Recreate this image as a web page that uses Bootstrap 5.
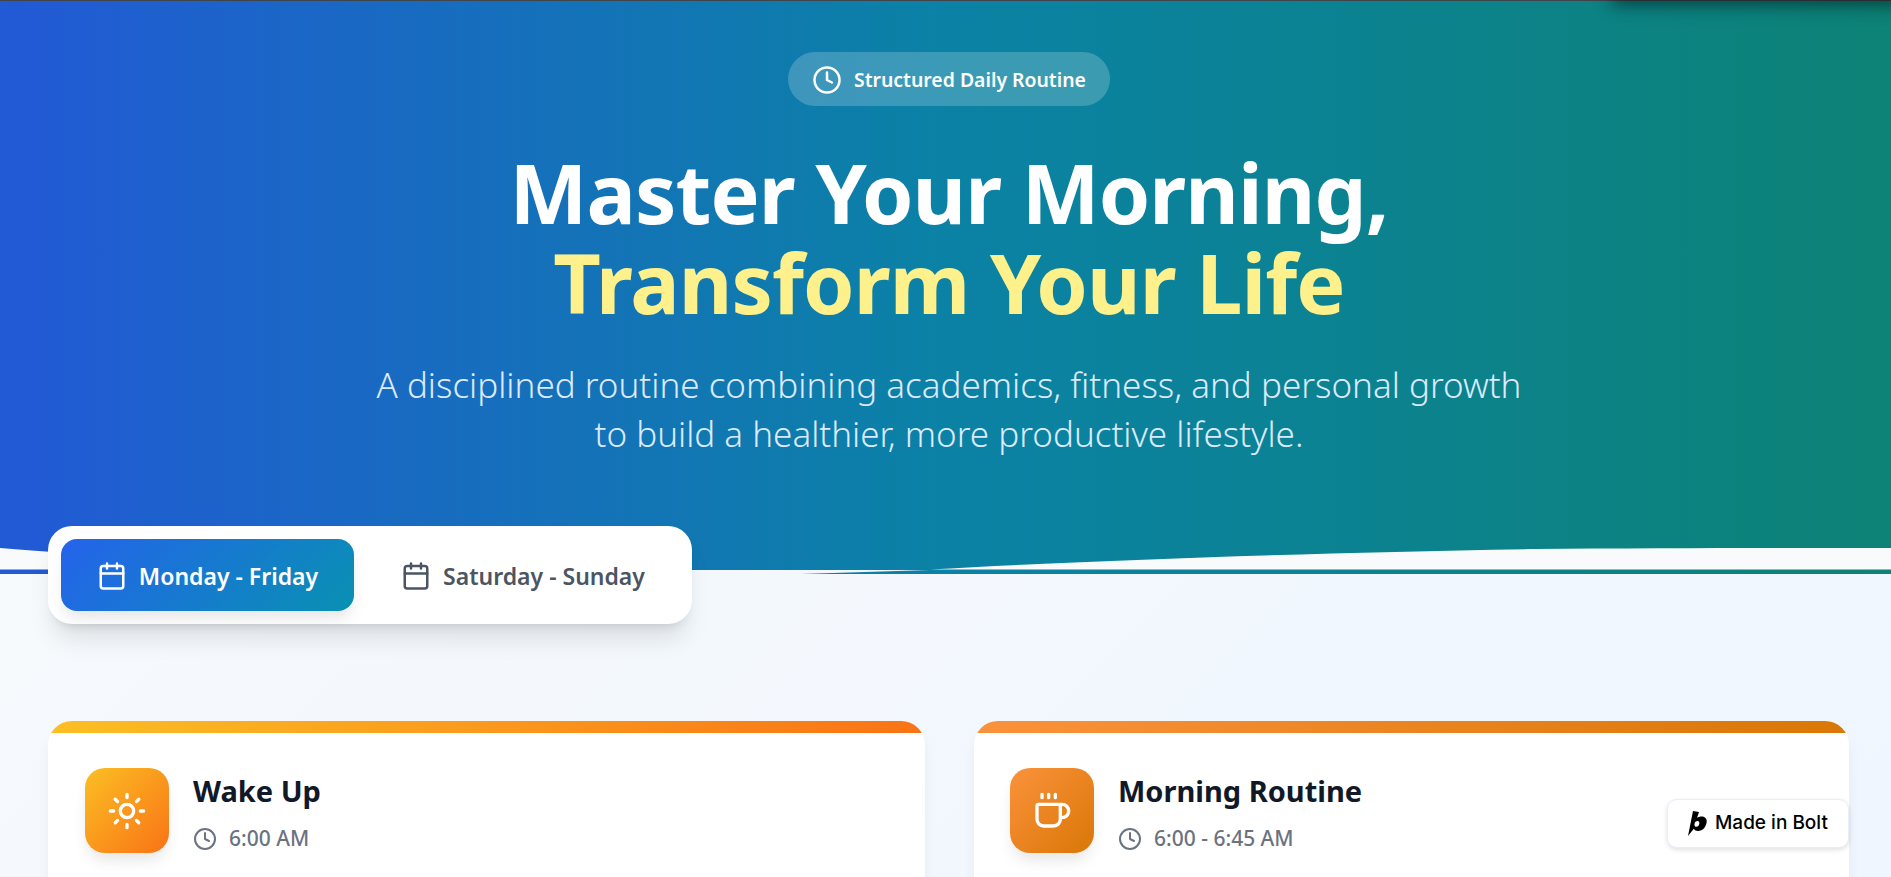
<!DOCTYPE html>
<html lang="en">
<head>
  <meta charset="UTF-8" />
  <meta name="viewport" content="width=device-width, initial-scale=1.0" />
  <title>Daily Routine</title>
  <link href="https://cdn.jsdelivr.net/npm/bootstrap@5.3.0/dist/css/bootstrap.min.css" rel="stylesheet">
  <style>
    body {
      font-family: "Noto Sans", "Open Sans", sans-serif;
      background: linear-gradient(135deg, #f8fafc, #eff6ff);
      height: 877px;
      overflow: hidden;
    }
    .hero-wrap {
      height: 574px;
      background: linear-gradient(90deg, #2259d6 0%, #0b82a5 50%, #0d8276 100%);
      border-top: 1px solid #3f454b;
      color: #fff;
      padding: 51px 0 0 7px;
    }
    .hero-wave {
      position: absolute;
      left: 0;
      top: 548px;
      width: 100%;
      height: 26px;
    }
    .top-shade {
      position: absolute;
      top: -20px;
      left: 1612px;
      right: -20px;
      height: 20px;
      box-shadow: 0 4px 18px rgba(0, 20, 20, .65);
    }
    .pill-tag {
      height: 54px;
      padding: 2px 24px 0;
      background: rgba(255, 255, 255, .2);
      font-size: 19.4px;
      font-weight: 600;
    }
    .hero-title {
      font-size: 82.5px;
      font-weight: 700;
      line-height: 90px;
      letter-spacing: -.9px;
      margin: 41px 0 0;
    }
    .hero-title span { display: block; }
    .hero-accent { color: #fef08a; }
    .hero-sub {
      font-size: 35px;
      font-weight: 300;
      line-height: 49px;
      color: #dbeafe;
      margin: 33px auto 0;
      width: 1160px;
    }
    .tab-box {
      position: absolute;
      left: 48px;
      top: 526px;
      width: 644px;
      height: 98px;
      background: #fff;
      border-radius: 24px;
      padding: 13px 0 13px 13px;
      box-shadow: 0 20px 25px -5px rgba(0, 0, 0, .1), 0 8px 10px -6px rgba(0, 0, 0, .1);
    }
    .tab-btn {
      height: 72px;
      padding-top: 2px;
      border-radius: 16px;
      font-size: 23px;
      font-weight: 600;
      color: #4b5563;
    }
    .tab-on {
      width: 293px;
      color: #fff;
      background: linear-gradient(135deg, #2563eb, #0891b2);
      box-shadow: 0 10px 15px -3px rgba(0, 0, 0, .1);
    }
    .tab-off { width: 338px; }
    .card-area {
      padding: 147px 42px 0 48px;
      gap: 49px;
    }
    .step-card {
      flex: 1 1 0;
      height: 300px;
      background: #fff;
      border-radius: 24px;
      overflow: hidden;
      box-shadow: 0 10px 15px -3px rgba(0, 0, 0, .08);
    }
    .step-wide { flex: 0 0 877px; }
    .step-bar { height: 12px; }
    .bar-sun { background: linear-gradient(90deg, #fbbf24, #f97316); }
    .bar-cup { background: linear-gradient(90deg, #fb923c, #d97706); }
    .step-body { padding: 35px 36px; }
    .step-wide .step-body { padding-left: 37px; }
    .step-icon {
      width: 84px;
      height: 85px;
      border-radius: 20px;
      box-shadow: 0 10px 15px -3px rgba(0, 0, 0, .1);
    }
    .icon-sun { background: linear-gradient(135deg, #fbbf24, #f97316); }
    .icon-cup { background: linear-gradient(135deg, #fb923c, #d97706); }
    .step-title {
      font-size: 29px;
      font-weight: 700;
      color: #111827;
      line-height: 36px;
      margin: 5px 0 14px;
    }
    .step-time {
      font-size: 21px;
      font-weight: 500;
      color: #6b7280;
    }
    .bolt-badge {
      position: absolute;
      left: 1667px;
      top: 799px;
      width: 182px;
      height: 49px;
      padding-left: 19px;
      background: #fff;
      border: 1px solid #e6effb;
      border-radius: 10px;
      font-family: Inter, sans-serif;
      font-size: 19px;
      font-weight: 500;
      color: #000;
      box-shadow: 0 2px 5px rgba(0, 0, 0, .12);
    }
  </style>
</head>
<body>

  <div class="hero-wrap text-center">
    <div class="d-inline-flex align-items-center gap-2 rounded-pill pill-tag">
      <svg width="30" height="30" viewBox="0 0 24 24" fill="none" stroke="#fff" stroke-width="2" stroke-linecap="round" stroke-linejoin="round"><circle cx="12" cy="12" r="10"/><path d="M12 6v6l4 2"/></svg>
      <span class="ms-1">Structured Daily Routine</span>
    </div>
    <h1 class="hero-title"><span>Master Your Morning,</span><span class="hero-accent">Transform Your Life</span></h1>
    <p class="hero-sub">A disciplined routine combining academics, fitness, and personal growth to build a healthier, more productive lifestyle.</p>
  </div>

  <!-- wave over the hero bottom; second path hides the hero strip in the middle -->
  <svg class="hero-wave" viewBox="0 0 1891 26" preserveAspectRatio="none">
    <path d="M0 0C200 16 400 21.500 660 21.500L930 21.500C1080 13 1300 5 1536 1C1650 0 1780 0 1891 0V21.500H0Z" fill="#f8fafc"/>
    <path d="M60 22H930L800 26H60Z" fill="#f4f8fe"/>
  </svg>
  <div class="top-shade"></div>

  <div class="tab-box d-flex">
    <div class="tab-btn tab-on d-flex align-items-center justify-content-center gap-2">
      <svg width="30" height="30" viewBox="0 0 24 24" fill="none" stroke="currentColor" stroke-width="2" stroke-linecap="round" stroke-linejoin="round"><path d="M8 2v4M16 2v4"/><rect x="3" y="4" width="18" height="18" rx="2"/><path d="M3 10h18"/></svg>
      <span class="ms-1">Monday - Friday</span>
    </div>
    <div class="tab-btn tab-off d-flex align-items-center justify-content-center gap-2">
      <svg width="30" height="30" viewBox="0 0 24 24" fill="none" stroke="currentColor" stroke-width="2" stroke-linecap="round" stroke-linejoin="round"><path d="M8 2v4M16 2v4"/><rect x="3" y="4" width="18" height="18" rx="2"/><path d="M3 10h18"/></svg>
      <span class="ms-1">Saturday - Sunday</span>
    </div>
  </div>

  <div class="d-flex card-area">
    <div class="step-card step-wide">
      <div class="step-bar bar-sun"></div>
      <div class="d-flex gap-4 step-body">
        <div class="step-icon icon-sun d-flex align-items-center justify-content-center">
          <svg width="40" height="40" viewBox="0 0 24 24" fill="none" stroke="#fff" stroke-width="2" stroke-linecap="round" stroke-linejoin="round"><circle cx="12" cy="12" r="4"/><path d="M12 2v2M12 20v2M4.930 4.930l1.410 1.410M17.660 17.660l1.410 1.410M2 12h2M20 12h2M6.340 17.660l-1.410 1.410M19.070 4.930l-1.410 1.410"/></svg>
        </div>
        <div>
          <div class="step-title">Wake Up</div>
          <div class="step-time d-flex align-items-center gap-2">
            <svg width="24" height="24" viewBox="0 0 24 24" fill="none" stroke="currentColor" stroke-width="2" stroke-linecap="round" stroke-linejoin="round"><circle cx="12" cy="12" r="10"/><path d="M12 6v6l4 2"/></svg>
            <span class="ms-1">6:00 AM</span>
          </div>
        </div>
      </div>
    </div>
    <div class="step-card">
      <div class="step-bar bar-cup"></div>
      <div class="d-flex gap-4 step-body">
        <div class="step-icon icon-cup d-flex align-items-center justify-content-center">
          <svg width="40" height="40" viewBox="0 0 24 24" fill="none" stroke="#fff" stroke-width="2" stroke-linecap="round" stroke-linejoin="round"><path d="M10 2v2M14 2v2M6 2v2"/><path d="M16 8a1 1 0 0 1 1 1v8a4 4 0 0 1-4 4H7a4 4 0 0 1-4-4V9a1 1 0 0 1 1-1h14a4 4 0 1 1 0 8h-1"/></svg>
        </div>
        <div>
          <div class="step-title">Morning Routine</div>
          <div class="step-time d-flex align-items-center gap-2">
            <svg width="24" height="24" viewBox="0 0 24 24" fill="none" stroke="currentColor" stroke-width="2" stroke-linecap="round" stroke-linejoin="round"><circle cx="12" cy="12" r="10"/><path d="M12 6v6l4 2"/></svg>
            <span class="ms-1">6:00 - 6:45 AM</span>
          </div>
        </div>
      </div>
    </div>
  </div>

  <div class="bolt-badge d-flex align-items-center gap-2">
    <svg width="20" height="25" viewBox="0 0 20 25" fill="#000"><path d="M6 0l6 1-2 6c1-1 3-1.500 4.500-1.500C18 5.500 20.500 8 19.500 12c-1 5-4.500 8-8.500 8-2 0-3.500-.8-4.200-2.200L1 25 6 0zM10.500 10c-1.500 0-2.700 1.300-3 3-.3 1.600.5 2.700 1.800 2.700 1.500 0 2.700-1.300 3-3 .3-1.600-.5-2.700-1.800-2.700z" fill-rule="evenodd"/></svg>
    <span>Made in Bolt</span>
  </div>

</body>
</html>
